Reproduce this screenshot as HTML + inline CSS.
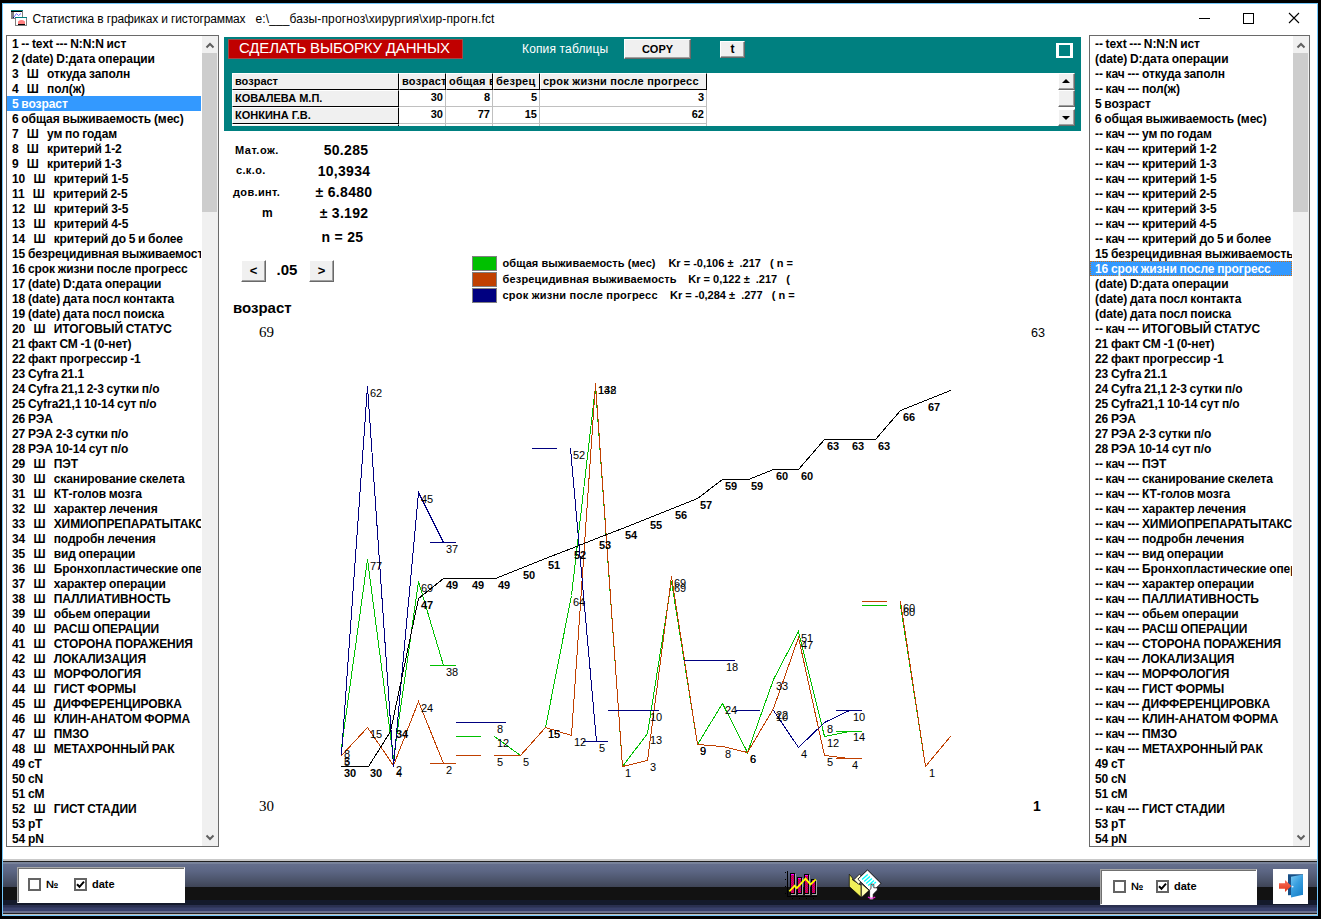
<!DOCTYPE html>
<html lang="ru"><head><meta charset="utf-8"><title>Статистика в графиках и гистограммах</title>
<style>
html,body{margin:0;padding:0;}
body{width:1321px;height:919px;background:#000;overflow:hidden;position:relative;font-family:"Liberation Sans",sans-serif;color:#000;}
.abs{position:absolute;}
#win{position:absolute;left:2px;top:3px;width:1314px;height:911px;border:1px solid #74c8fb;background:#fff;}
#title{position:absolute;left:32.5px;top:11px;font-size:12px;line-height:16px;white-space:pre;letter-spacing:0px;}
.list{position:absolute;top:35px;height:810px;border:1px solid #6a6a6a;background:#fff;overflow:hidden;}
.list .rows{position:absolute;left:0;top:0;right:17px;bottom:0;overflow:hidden;}
.list .r{height:15px;line-height:15px;font-size:12px;font-weight:bold;white-space:nowrap;padding-left:5px;overflow:hidden;letter-spacing:-0.08px;word-spacing:-0.5px;}
.list .r span{position:relative;top:1px;}
.list .r.sel{background:#3399ff;color:#fff;}
.list .r.foc{outline:1px dotted #d07010;outline-offset:-1px;}
.list .sb{position:absolute;right:0;top:0;bottom:0;width:16px;background:#f0f0f0;}
.list .sb .th{position:absolute;left:0;width:15px;top:17px;height:159px;background:#cdcdcd;}
.b{font-weight:bold;}
.btn{position:absolute;background:#f0f0f0;box-sizing:border-box;border:1px solid;border-color:#fff #696969 #696969 #fff;box-shadow:inset -1px -1px 0 #a0a0a0;font-weight:bold;text-align:center;}
.t{position:absolute;white-space:nowrap;}
svg text{font-family:"Liberation Sans",sans-serif;}
</style></head><body>
<div id="win"></div>

<div id="title"><span style="letter-spacing:-0.14px">Статистика в графиках и гистограммах</span>   <span style="letter-spacing:0.13px">e:\___базы-прогноз\хирургия\хир-прогн.fct</span></div>
<svg class="abs" style="left:0;top:0" width="1321" height="36" shape-rendering="crispEdges">
<g>
<rect x="11.5" y="10.5" width="11" height="8" fill="#fff" stroke="#808080"/>
<rect x="11" y="10" width="12" height="1" fill="#008080"/>
<rect x="11" y="11" width="11" height="1" fill="#000"/>
<rect x="12" y="12" width="2" height="6" fill="#808080"/>
<rect x="13" y="17" width="1" height="1" fill="#000080"/>
<polyline points="14,17 16.5,13.5 18.5,15.5 21,13.5" fill="none" stroke="#7070ff" shape-rendering="auto"/>
<rect x="15.5" y="17.5" width="11" height="8" fill="#fff" stroke="#808080"/>
<rect x="15" y="17" width="12" height="1" fill="#008080"/>
<path d="M18 24 V21.5 Q21.5 18.6 25 21.5 V24 Z" fill="#ff8080" shape-rendering="auto"/>
<rect x="18" y="24" width="7" height="1" fill="#000"/>
</g>
<rect x="1199" y="18" width="11" height="1" fill="#000"/>
<rect x="1243.5" y="13.5" width="10" height="10" fill="none" stroke="#000"/>
<path d="M1289 13 L1299 23 M1299 13 L1289 23" stroke="#000" stroke-width="1.1" fill="none" shape-rendering="auto"/>
</svg>
<div class="list" style="left:6px;width:211px"><div class="rows">
<div class="r"><span>1 -- text --- N:N:N ист</span></div>
<div class="r"><span>2 (date) D:дата операции</span></div>
<div class="r"><span>3&nbsp;&nbsp;&nbsp;Ш&nbsp;&nbsp;&nbsp;откуда заполн</span></div>
<div class="r"><span>4&nbsp;&nbsp;&nbsp;Ш&nbsp;&nbsp;&nbsp;пол(ж)</span></div>
<div class="r sel"><span>5 возраст</span></div>
<div class="r"><span>6 общая выживаемость (мес)</span></div>
<div class="r"><span>7&nbsp;&nbsp;&nbsp;Ш&nbsp;&nbsp;&nbsp;ум по годам</span></div>
<div class="r"><span>8&nbsp;&nbsp;&nbsp;Ш&nbsp;&nbsp;&nbsp;критерий 1-2</span></div>
<div class="r"><span>9&nbsp;&nbsp;&nbsp;Ш&nbsp;&nbsp;&nbsp;критерий 1-3</span></div>
<div class="r"><span>10&nbsp;&nbsp;&nbsp;Ш&nbsp;&nbsp;&nbsp;критерий 1-5</span></div>
<div class="r"><span>11&nbsp;&nbsp;&nbsp;Ш&nbsp;&nbsp;&nbsp;критерий 2-5</span></div>
<div class="r"><span>12&nbsp;&nbsp;&nbsp;Ш&nbsp;&nbsp;&nbsp;критерий 3-5</span></div>
<div class="r"><span>13&nbsp;&nbsp;&nbsp;Ш&nbsp;&nbsp;&nbsp;критерий 4-5</span></div>
<div class="r"><span>14&nbsp;&nbsp;&nbsp;Ш&nbsp;&nbsp;&nbsp;критерий до 5 и более</span></div>
<div class="r"><span>15 безрецидивная выживаемость</span></div>
<div class="r"><span>16 срок жизни после прогресс</span></div>
<div class="r"><span>17 (date) D:дата операции</span></div>
<div class="r"><span>18 (date) дата посл контакта</span></div>
<div class="r"><span>19 (date) дата посл поиска</span></div>
<div class="r"><span>20&nbsp;&nbsp;&nbsp;Ш&nbsp;&nbsp;&nbsp;ИТОГОВЫЙ СТАТУС</span></div>
<div class="r"><span>21 факт СМ -1 (0-нет)</span></div>
<div class="r"><span>22 факт прогрессир -1</span></div>
<div class="r"><span>23 Cyfra 21.1</span></div>
<div class="r"><span>24 Cyfra 21,1 2-3 сутки п/о</span></div>
<div class="r"><span>25 Cyfra21,1 10-14 сут п/о</span></div>
<div class="r"><span>26 РЭА</span></div>
<div class="r"><span>27 РЭА 2-3 сутки п/о</span></div>
<div class="r"><span>28 РЭА 10-14 сут п/о</span></div>
<div class="r"><span>29&nbsp;&nbsp;&nbsp;Ш&nbsp;&nbsp;&nbsp;ПЭТ</span></div>
<div class="r"><span>30&nbsp;&nbsp;&nbsp;Ш&nbsp;&nbsp;&nbsp;сканирование скелета</span></div>
<div class="r"><span>31&nbsp;&nbsp;&nbsp;Ш&nbsp;&nbsp;&nbsp;КТ-голов мозга</span></div>
<div class="r"><span>32&nbsp;&nbsp;&nbsp;Ш&nbsp;&nbsp;&nbsp;характер лечения</span></div>
<div class="r"><span>33&nbsp;&nbsp;&nbsp;Ш&nbsp;&nbsp;&nbsp;ХИМИОПРЕПАРАТЫТАКСОЛ</span></div>
<div class="r"><span>34&nbsp;&nbsp;&nbsp;Ш&nbsp;&nbsp;&nbsp;подробн лечения</span></div>
<div class="r"><span>35&nbsp;&nbsp;&nbsp;Ш&nbsp;&nbsp;&nbsp;вид операции</span></div>
<div class="r"><span>36&nbsp;&nbsp;&nbsp;Ш&nbsp;&nbsp;&nbsp;Бронхопластические опер</span></div>
<div class="r"><span>37&nbsp;&nbsp;&nbsp;Ш&nbsp;&nbsp;&nbsp;характер операции</span></div>
<div class="r"><span>38&nbsp;&nbsp;&nbsp;Ш&nbsp;&nbsp;&nbsp;ПАЛЛИАТИВНОСТЬ</span></div>
<div class="r"><span>39&nbsp;&nbsp;&nbsp;Ш&nbsp;&nbsp;&nbsp;обьем операции</span></div>
<div class="r"><span>40&nbsp;&nbsp;&nbsp;Ш&nbsp;&nbsp;&nbsp;РАСШ ОПЕРАЦИИ</span></div>
<div class="r"><span>41&nbsp;&nbsp;&nbsp;Ш&nbsp;&nbsp;&nbsp;СТОРОНА ПОРАЖЕНИЯ</span></div>
<div class="r"><span>42&nbsp;&nbsp;&nbsp;Ш&nbsp;&nbsp;&nbsp;ЛОКАЛИЗАЦИЯ</span></div>
<div class="r"><span>43&nbsp;&nbsp;&nbsp;Ш&nbsp;&nbsp;&nbsp;МОРФОЛОГИЯ</span></div>
<div class="r"><span>44&nbsp;&nbsp;&nbsp;Ш&nbsp;&nbsp;&nbsp;ГИСТ ФОРМЫ</span></div>
<div class="r"><span>45&nbsp;&nbsp;&nbsp;Ш&nbsp;&nbsp;&nbsp;ДИФФЕРЕНЦИРОВКА</span></div>
<div class="r"><span>46&nbsp;&nbsp;&nbsp;Ш&nbsp;&nbsp;&nbsp;КЛИН-АНАТОМ ФОРМА</span></div>
<div class="r"><span>47&nbsp;&nbsp;&nbsp;Ш&nbsp;&nbsp;&nbsp;ПМЗО</span></div>
<div class="r"><span>48&nbsp;&nbsp;&nbsp;Ш&nbsp;&nbsp;&nbsp;МЕТАХРОННЫЙ РАК</span></div>
<div class="r"><span>49 cT</span></div>
<div class="r"><span>50 cN</span></div>
<div class="r"><span>51 cM</span></div>
<div class="r"><span>52&nbsp;&nbsp;&nbsp;Ш&nbsp;&nbsp;&nbsp;ГИСТ СТАДИИ</span></div>
<div class="r"><span>53 pT</span></div>
<div class="r"><span>54 pN</span></div>
</div><div class="sb"><div class="th"></div>
<svg class="abs" style="left:0;top:0" width="16" height="810"><path d="M4.5 11.5 L8 8 L11.5 11.5" fill="none" stroke="#606060" stroke-width="2"/><path d="M4.5 799.5 L8 803 L11.5 799.5" fill="none" stroke="#606060" stroke-width="2"/></svg>
</div></div>
<div class="list" style="left:1089px;width:219px"><div class="rows">
<div class="r"><span>-- text --- N:N:N ист</span></div>
<div class="r"><span>(date) D:дата операции</span></div>
<div class="r"><span>-- кач --- откуда заполн</span></div>
<div class="r"><span>-- кач --- пол(ж)</span></div>
<div class="r"><span>5 возраст</span></div>
<div class="r"><span>6 общая выживаемость (мес)</span></div>
<div class="r"><span>-- кач --- ум по годам</span></div>
<div class="r"><span>-- кач --- критерий 1-2</span></div>
<div class="r"><span>-- кач --- критерий 1-3</span></div>
<div class="r"><span>-- кач --- критерий 1-5</span></div>
<div class="r"><span>-- кач --- критерий 2-5</span></div>
<div class="r"><span>-- кач --- критерий 3-5</span></div>
<div class="r"><span>-- кач --- критерий 4-5</span></div>
<div class="r"><span>-- кач --- критерий до 5 и более</span></div>
<div class="r"><span>15 безрецидивная выживаемость</span></div>
<div class="r sel foc"><span>16 срок жизни после прогресс</span></div>
<div class="r"><span>(date) D:дата операции</span></div>
<div class="r"><span>(date) дата посл контакта</span></div>
<div class="r"><span>(date) дата посл поиска</span></div>
<div class="r"><span>-- кач --- ИТОГОВЫЙ СТАТУС</span></div>
<div class="r"><span>21 факт СМ -1 (0-нет)</span></div>
<div class="r"><span>22 факт прогрессир -1</span></div>
<div class="r"><span>23 Cyfra 21.1</span></div>
<div class="r"><span>24 Cyfra 21,1 2-3 сутки п/о</span></div>
<div class="r"><span>25 Cyfra21,1 10-14 сут п/о</span></div>
<div class="r"><span>26 РЭА</span></div>
<div class="r"><span>27 РЭА 2-3 сутки п/о</span></div>
<div class="r"><span>28 РЭА 10-14 сут п/о</span></div>
<div class="r"><span>-- кач --- ПЭТ</span></div>
<div class="r"><span>-- кач --- сканирование скелета</span></div>
<div class="r"><span>-- кач --- КТ-голов мозга</span></div>
<div class="r"><span>-- кач --- характер лечения</span></div>
<div class="r"><span>-- кач --- ХИМИОПРЕПАРАТЫТАКСОЛ</span></div>
<div class="r"><span>-- кач --- подробн лечения</span></div>
<div class="r"><span>-- кач --- вид операции</span></div>
<div class="r"><span>-- кач --- Бронхопластические опер</span></div>
<div class="r"><span>-- кач --- характер операции</span></div>
<div class="r"><span>-- кач --- ПАЛЛИАТИВНОСТЬ</span></div>
<div class="r"><span>-- кач --- обьем операции</span></div>
<div class="r"><span>-- кач --- РАСШ ОПЕРАЦИИ</span></div>
<div class="r"><span>-- кач --- СТОРОНА ПОРАЖЕНИЯ</span></div>
<div class="r"><span>-- кач --- ЛОКАЛИЗАЦИЯ</span></div>
<div class="r"><span>-- кач --- МОРФОЛОГИЯ</span></div>
<div class="r"><span>-- кач --- ГИСТ ФОРМЫ</span></div>
<div class="r"><span>-- кач --- ДИФФЕРЕНЦИРОВКА</span></div>
<div class="r"><span>-- кач --- КЛИН-АНАТОМ ФОРМА</span></div>
<div class="r"><span>-- кач --- ПМЗО</span></div>
<div class="r"><span>-- кач --- МЕТАХРОННЫЙ РАК</span></div>
<div class="r"><span>49 cT</span></div>
<div class="r"><span>50 cN</span></div>
<div class="r"><span>51 cM</span></div>
<div class="r"><span>-- кач --- ГИСТ СТАДИИ</span></div>
<div class="r"><span>53 pT</span></div>
<div class="r"><span>54 pN</span></div>
</div><div class="sb"><div class="th"></div>
<svg class="abs" style="left:0;top:0" width="16" height="810"><path d="M4.5 11.5 L8 8 L11.5 11.5" fill="none" stroke="#606060" stroke-width="2"/><path d="M4.5 799.5 L8 803 L11.5 799.5" fill="none" stroke="#606060" stroke-width="2"/></svg>
</div></div>
<div class="abs" style="left:224px;top:37px;width:857px;height:94px;background:#008080"></div>
<div class="abs" style="left:228px;top:39px;width:233px;height:18px;background:#c00000;border:1px solid #a04848;color:#fff;font-size:15px;letter-spacing:-0.18px;line-height:19px;white-space:nowrap"><span style="position:absolute;left:10px;top:-2px">СДЕЛАТЬ ВЫБОРКУ ДАННЫХ</span></div>
<div class="t" style="left:522px;top:42px;font-size:12px;line-height:14px;letter-spacing:0.15px;color:#fff">Копия таблицы</div>
<div class="btn" style="left:624px;top:39px;width:67px;height:20px;font-size:11px;line-height:18px">COPY</div>
<div class="btn" style="left:720px;top:41px;width:25px;height:17px;font-size:12px;line-height:14px">t</div>
<div class="abs" style="left:1056px;top:43px;width:11px;height:11px;border:2px solid #fff;border-left-width:3px;border-right-width:3px"></div>
<div class="abs" style="left:232px;top:73px;width:826px;height:53px;background:#fff;overflow:hidden;font-size:11px;font-weight:bold;line-height:15px">
<div class="abs" style="letter-spacing:0px;left:0px;top:0px;width:167px;height:17px;background:#f0f0f0;border-top:1px solid #fff;border-left:1px solid #fff;border-right:1px solid #000;border-bottom:1px solid #000;box-sizing:border-box;overflow:hidden;white-space:nowrap"><span style="position:absolute;left:2px;top:0px">возраст</span></div>
<div class="abs" style="letter-spacing:0.25px;left:167px;top:0px;width:47px;height:17px;background:#f0f0f0;border-top:1px solid #fff;border-left:1px solid #fff;border-right:1px solid #000;border-bottom:1px solid #000;box-sizing:border-box;overflow:hidden;white-space:nowrap"><span style="position:absolute;left:2px;top:0px">возраст</span></div>
<div class="abs" style="letter-spacing:0.25px;left:214px;top:0px;width:47px;height:17px;background:#f0f0f0;border-top:1px solid #fff;border-left:1px solid #fff;border-right:1px solid #000;border-bottom:1px solid #000;box-sizing:border-box;overflow:hidden;white-space:nowrap"><span style="position:absolute;left:2px;top:0px">общая в</span></div>
<div class="abs" style="letter-spacing:0.25px;left:261px;top:0px;width:47px;height:17px;background:#f0f0f0;border-top:1px solid #fff;border-left:1px solid #fff;border-right:1px solid #000;border-bottom:1px solid #000;box-sizing:border-box;overflow:hidden;white-space:nowrap"><span style="position:absolute;left:2px;top:0px">безрец</span></div>
<div class="abs" style="letter-spacing:0.25px;left:308px;top:0px;width:167px;height:17px;background:#f0f0f0;border-top:1px solid #fff;border-left:1px solid #fff;border-right:1px solid #000;border-bottom:1px solid #000;box-sizing:border-box;overflow:hidden;white-space:nowrap"><span style="position:absolute;left:2px;top:0px">срок жизни после прогресс</span></div>
<div class="abs" style="letter-spacing:0px;left:0px;top:17px;width:167px;height:17px;background:#f0f0f0;border-top:1px solid #fff;border-left:1px solid #fff;border-right:1px solid #000;border-bottom:1px solid #000;box-sizing:border-box;overflow:hidden;white-space:nowrap"><span style="position:absolute;left:2px;top:0px">КОВАЛЕВА М.П.</span></div>
<div class="abs" style="left:167px;top:17px;width:47px;height:17px;border-right:1px solid #c0c0c0;border-bottom:1px solid #c0c0c0;box-sizing:border-box;text-align:right;padding-right:2px;overflow:hidden;white-space:nowrap">30</div>
<div class="abs" style="left:214px;top:17px;width:47px;height:17px;border-right:1px solid #c0c0c0;border-bottom:1px solid #c0c0c0;box-sizing:border-box;text-align:right;padding-right:2px;overflow:hidden;white-space:nowrap">8</div>
<div class="abs" style="left:261px;top:17px;width:47px;height:17px;border-right:1px solid #c0c0c0;border-bottom:1px solid #c0c0c0;box-sizing:border-box;text-align:right;padding-right:2px;overflow:hidden;white-space:nowrap">5</div>
<div class="abs" style="left:308px;top:17px;width:167px;height:17px;border-right:1px solid #c0c0c0;border-bottom:1px solid #c0c0c0;box-sizing:border-box;text-align:right;padding-right:2px;overflow:hidden;white-space:nowrap">3</div>
<div class="abs" style="letter-spacing:0px;left:0px;top:34px;width:167px;height:17px;background:#f0f0f0;border-top:1px solid #fff;border-left:1px solid #fff;border-right:1px solid #000;border-bottom:1px solid #000;box-sizing:border-box;overflow:hidden;white-space:nowrap"><span style="position:absolute;left:2px;top:0px">КОНКИНА Г.В.</span></div>
<div class="abs" style="left:167px;top:34px;width:47px;height:17px;border-right:1px solid #c0c0c0;border-bottom:1px solid #c0c0c0;box-sizing:border-box;text-align:right;padding-right:2px;overflow:hidden;white-space:nowrap">30</div>
<div class="abs" style="left:214px;top:34px;width:47px;height:17px;border-right:1px solid #c0c0c0;border-bottom:1px solid #c0c0c0;box-sizing:border-box;text-align:right;padding-right:2px;overflow:hidden;white-space:nowrap">77</div>
<div class="abs" style="left:261px;top:34px;width:47px;height:17px;border-right:1px solid #c0c0c0;border-bottom:1px solid #c0c0c0;box-sizing:border-box;text-align:right;padding-right:2px;overflow:hidden;white-space:nowrap">15</div>
<div class="abs" style="left:308px;top:34px;width:167px;height:17px;border-right:1px solid #c0c0c0;border-bottom:1px solid #c0c0c0;box-sizing:border-box;text-align:right;padding-right:2px;overflow:hidden;white-space:nowrap">62</div>
<div class="abs" style="letter-spacing:0px;left:0px;top:51px;width:167px;height:17px;background:#f0f0f0;border-top:1px solid #fff;border-left:1px solid #fff;border-right:1px solid #000;border-bottom:1px solid #000;box-sizing:border-box;overflow:hidden;white-space:nowrap"><span style="position:absolute;left:2px;top:0px"></span></div>
<div class="abs" style="left:167px;top:51px;width:47px;height:17px;border-right:1px solid #c0c0c0;border-bottom:1px solid #c0c0c0;box-sizing:border-box;text-align:right;padding-right:2px;overflow:hidden;white-space:nowrap"></div>
<div class="abs" style="left:214px;top:51px;width:47px;height:17px;border-right:1px solid #c0c0c0;border-bottom:1px solid #c0c0c0;box-sizing:border-box;text-align:right;padding-right:2px;overflow:hidden;white-space:nowrap"></div>
<div class="abs" style="left:261px;top:51px;width:47px;height:17px;border-right:1px solid #c0c0c0;border-bottom:1px solid #c0c0c0;box-sizing:border-box;text-align:right;padding-right:2px;overflow:hidden;white-space:nowrap"></div>
<div class="abs" style="left:308px;top:51px;width:167px;height:17px;border-right:1px solid #c0c0c0;border-bottom:1px solid #c0c0c0;box-sizing:border-box;text-align:right;padding-right:2px;overflow:hidden;white-space:nowrap"></div>
</div>
<div class="abs" style="left:1058px;top:73px;width:17px;height:53px;background:#fff"></div>
<div class="btn" style="left:1058px;top:73px;width:17px;height:17px"></div>
<div class="btn" style="left:1058px;top:90px;width:17px;height:17px"></div>
<div class="btn" style="left:1058px;top:109px;width:17px;height:17px"></div>
<svg class="abs" style="left:1058px;top:72px" width="17" height="54"><path d="M4 11 L8 7 L12 11 Z" fill="#000"/><path d="M4 44 L8 48 L12 44 Z" fill="#000"/></svg>
<svg class="abs" style="left:0;top:0" width="1321" height="860"><text x="235" y="154" font-size="11" font-weight="bold" letter-spacing="0.5">Мат.ож.</text>
<text x="236" y="174" font-size="11" font-weight="bold" letter-spacing="0.35">с.к.о.</text>
<text x="233" y="196" font-size="11" font-weight="bold" letter-spacing="0.35">дов.инт.</text>
<text x="262" y="217" font-size="12" font-weight="bold">m</text>
<text x="346" y="155" font-size="14" font-weight="bold" text-anchor="middle" letter-spacing="0.3">50.285</text>
<text x="344" y="176" font-size="14" font-weight="bold" text-anchor="middle" letter-spacing="0.3">10,3934</text>
<text x="344" y="197" font-size="14" font-weight="bold" text-anchor="middle" letter-spacing="0.3">± 6.8480</text>
<text x="344" y="218" font-size="14" font-weight="bold" text-anchor="middle" letter-spacing="0.3">± 3.192</text>
<text x="342.5" y="242" font-size="14" font-weight="bold" text-anchor="middle" letter-spacing="0.3">n = 25</text>
<text x="287" y="275" font-size="15" font-weight="bold" text-anchor="middle">.05</text>
<text x="233" y="313" font-size="15" font-weight="bold">возраст</text>
<text x="259" y="337" font-size="15" style="font-family:&quot;Liberation Serif&quot;,serif">69</text>
<text x="1031" y="337" font-size="13.6" textLength="14" lengthAdjust="spacingAndGlyphs">63</text>
<text x="259" y="811" font-size="15" style="font-family:&quot;Liberation Serif&quot;,serif">30</text>
<text x="1033" y="811" font-size="14" font-weight="bold">1</text>
<rect x="472.5" y="256.5" width="24" height="14" fill="#00c000" stroke="#808080" shape-rendering="crispEdges"/>
<text x="502.5" y="267" font-size="11" font-weight="bold" textLength="153" lengthAdjust="spacing">общая выживаемость (мес)</text>
<text x="668.4" y="267" font-size="11" font-weight="bold" xml:space="preserve">Kr = -0,106 ±  .217   ( n =</text>
<rect x="472.5" y="272.5" width="24" height="14" fill="#c04000" stroke="#808080" shape-rendering="crispEdges"/>
<text x="502.5" y="283" font-size="11" font-weight="bold" textLength="174" lengthAdjust="spacing">безрецидивная выживаемость</text>
<text x="688.3" y="283" font-size="11" font-weight="bold" xml:space="preserve">Kr = 0,122 ±  .217   (</text>
<rect x="472.5" y="288.5" width="24" height="14" fill="#000080" stroke="#808080" shape-rendering="crispEdges"/>
<text x="502.5" y="299" font-size="11" font-weight="bold" textLength="155" lengthAdjust="spacing">срок жизни после прогресс</text>
<text x="670" y="299" font-size="11" font-weight="bold" xml:space="preserve">Kr = -0,284 ±  .277   ( n =</text>
<polyline points="341.5,747.5 367.5,559.5 393.5,758.5 418.5,581.5 443.5,665.5" fill="none" stroke="#00c000" stroke-width="1" stroke-linecap="square" shape-rendering="crispEdges"/>
<rect x="430" y="665" width="26" height="1" fill="#00c000" shape-rendering="crispEdges"/>
<rect x="456" y="736" width="25" height="1" fill="#00c000" shape-rendering="crispEdges"/>
<polyline points="494.5,736.5 520.5,755.5 545.5,727.5 571.5,595.5 595.5,386.5 622.5,766.5 647.5,733.5 671.5,581.5 697.5,744.5 722.5,703.5 747.5,752.5 773.5,679.5 798.5,631.5 824.5,736.5 849.5,731.5" fill="none" stroke="#00c000" stroke-width="1" stroke-linecap="square" shape-rendering="crispEdges"/>
<rect x="836" y="731" width="26" height="1" fill="#00c000" shape-rendering="crispEdges"/>
<rect x="862" y="605" width="25" height="1" fill="#00c000" shape-rendering="crispEdges"/>
<polyline points="900.5,605.5 925.5,766.5 950.5,736.5" fill="none" stroke="#00c000" stroke-width="1" stroke-linecap="square" shape-rendering="crispEdges"/>
<polyline points="341.5,755.5 367.5,727.5 393.5,765.5 418.5,701.5 443.5,763.5" fill="none" stroke="#c04000" stroke-width="1" stroke-linecap="square" shape-rendering="crispEdges"/>
<rect x="430" y="763" width="26" height="1" fill="#c04000" shape-rendering="crispEdges"/>
<rect x="456" y="755" width="25" height="1" fill="#c04000" shape-rendering="crispEdges"/>
<rect x="494" y="755" width="26" height="1" fill="#c04000" shape-rendering="crispEdges"/>
<polyline points="520.5,755.5 545.5,727.5 571.5,735.5 595.5,383.5 622.5,766.5 647.5,760.5 671.5,576.5 697.5,744.5 722.5,746.5 747.5,752.5 773.5,708.5 798.5,637.5 824.5,755.5 849.5,758.5" fill="none" stroke="#c04000" stroke-width="1" stroke-linecap="square" shape-rendering="crispEdges"/>
<rect x="836" y="758" width="26" height="1" fill="#c04000" shape-rendering="crispEdges"/>
<rect x="862" y="601" width="25" height="1" fill="#c04000" shape-rendering="crispEdges"/>
<polyline points="900.5,601.5 925.5,766.5 950.5,736.5" fill="none" stroke="#c04000" stroke-width="1" stroke-linecap="square" shape-rendering="crispEdges"/>
<polyline points="341.5,754.5 367.5,386.5 393.5,766.5 418.5,492.5 443.5,542.5" fill="none" stroke="#000080" stroke-width="1" stroke-linecap="square" shape-rendering="crispEdges"/>
<rect x="430" y="542" width="26" height="1" fill="#000080" shape-rendering="crispEdges"/>
<rect x="456" y="722" width="50" height="1" fill="#000080" shape-rendering="crispEdges"/>
<rect x="532" y="448" width="25" height="1" fill="#000080" shape-rendering="crispEdges"/>
<polyline points="570.5,448.5 596.5,741.5" fill="none" stroke="#000080" stroke-width="1" stroke-linecap="square" shape-rendering="crispEdges"/>
<rect x="583" y="741" width="25" height="1" fill="#000080" shape-rendering="crispEdges"/>
<rect x="608" y="710" width="51" height="1" fill="#000080" shape-rendering="crispEdges"/>
<rect x="684" y="660" width="51" height="1" fill="#000080" shape-rendering="crispEdges"/>
<rect x="736" y="710" width="24" height="1" fill="#000080" shape-rendering="crispEdges"/>
<polyline points="773.5,710.5 798.5,747.5 824.5,722.5 849.5,710.5" fill="none" stroke="#000080" stroke-width="1" stroke-linecap="square" shape-rendering="crispEdges"/>
<rect x="836" y="710" width="26" height="1" fill="#000080" shape-rendering="crispEdges"/>
<polyline points="341.5,766.5 368.5,766.5 390.5,731.5 418.5,598.5 443.5,578.5 469.5,578.5 495.5,578.5 520.5,568.5 545.5,558.5 571.5,548.5 596.5,538.5 622.5,528.5 647.5,518.5 672.5,508.5 697.5,498.5 722.5,479.5 748.5,479.5 773.5,469.5 798.5,469.5 824.5,439.5 849.5,439.5 875.5,439.5 900.5,410.5 925.5,400.5 950.5,390.5" fill="none" stroke="#000" stroke-width="1" stroke-linecap="square" shape-rendering="crispEdges"/>
<text x="344" y="758" font-size="11">8</text>
<text x="370" y="570" font-size="11">77</text>
<text x="421" y="592" font-size="11">69</text>
<text x="446" y="676" font-size="11">38</text>
<text x="497" y="747" font-size="11">12</text>
<text x="548" y="738" font-size="11">15</text>
<text x="573" y="606" font-size="11">64</text>
<text x="598" y="394" font-size="11">142</text>
<text x="625" y="777" font-size="11">1</text>
<text x="650" y="744" font-size="11">13</text>
<text x="674" y="592" font-size="11">69</text>
<text x="700" y="755" font-size="11">9</text>
<text x="725" y="714" font-size="11">24</text>
<text x="750" y="763" font-size="11">6</text>
<text x="776" y="690" font-size="11">33</text>
<text x="801" y="642" font-size="11">51</text>
<text x="827" y="747" font-size="11">12</text>
<text x="853" y="741" font-size="11">14</text>
<text x="903" y="616" font-size="11">60</text>
<text x="929" y="777" font-size="11">1</text>
<text x="344" y="766" font-size="11">5</text>
<text x="370" y="738" font-size="11">15</text>
<text x="396" y="774" font-size="11">2</text>
<text x="421" y="712" font-size="11">24</text>
<text x="446" y="774" font-size="11">2</text>
<text x="497" y="766" font-size="11">5</text>
<text x="523" y="766" font-size="11">5</text>
<text x="548" y="738" font-size="11">15</text>
<text x="574" y="746" font-size="11">12</text>
<text x="598" y="394" font-size="11">138</text>
<text x="650" y="771" font-size="11">3</text>
<text x="674" y="587" font-size="11">69</text>
<text x="700" y="755" font-size="11">9</text>
<text x="725" y="758" font-size="11">8</text>
<text x="750" y="763" font-size="11">6</text>
<text x="776" y="719" font-size="11">22</text>
<text x="801" y="649" font-size="11">47</text>
<text x="827" y="766" font-size="11">5</text>
<text x="852" y="769" font-size="11">4</text>
<text x="903" y="612" font-size="11">60</text>
<text x="344" y="765" font-size="11">3</text>
<text x="370" y="397" font-size="11">62</text>
<text x="396" y="777" font-size="11">4</text>
<text x="421" y="503" font-size="11">45</text>
<text x="446" y="553" font-size="11">37</text>
<text x="497" y="733" font-size="11">8</text>
<text x="573" y="459" font-size="11">52</text>
<text x="599" y="752" font-size="11">5</text>
<text x="650" y="721" font-size="11">10</text>
<text x="726" y="671" font-size="11">18</text>
<text x="776" y="721" font-size="11">10</text>
<text x="801" y="758" font-size="11">4</text>
<text x="827" y="733" font-size="11">8</text>
<text x="853" y="721" font-size="11">10</text>
<text x="344" y="777" font-size="11" font-weight="bold">30</text>
<text x="370" y="777" font-size="11" font-weight="bold">30</text>
<text x="396" y="738" font-size="11" font-weight="bold">34</text>
<text x="421" y="609" font-size="11" font-weight="bold">47</text>
<text x="446" y="589" font-size="11" font-weight="bold">49</text>
<text x="472" y="589" font-size="11" font-weight="bold">49</text>
<text x="498" y="589" font-size="11" font-weight="bold">49</text>
<text x="523" y="579" font-size="11" font-weight="bold">50</text>
<text x="548" y="569" font-size="11" font-weight="bold">51</text>
<text x="574" y="559" font-size="11" font-weight="bold">52</text>
<text x="599" y="549" font-size="11" font-weight="bold">53</text>
<text x="625" y="539" font-size="11" font-weight="bold">54</text>
<text x="650" y="529" font-size="11" font-weight="bold">55</text>
<text x="675" y="519" font-size="11" font-weight="bold">56</text>
<text x="700" y="509" font-size="11" font-weight="bold">57</text>
<text x="725" y="490" font-size="11" font-weight="bold">59</text>
<text x="751" y="490" font-size="11" font-weight="bold">59</text>
<text x="776" y="480" font-size="11" font-weight="bold">60</text>
<text x="801" y="480" font-size="11" font-weight="bold">60</text>
<text x="827" y="450" font-size="11" font-weight="bold">63</text>
<text x="852" y="450" font-size="11" font-weight="bold">63</text>
<text x="878" y="450" font-size="11" font-weight="bold">63</text>
<text x="903" y="421" font-size="11" font-weight="bold">66</text>
<text x="928" y="411" font-size="11" font-weight="bold">67</text></svg>
<div class="btn" style="left:241px;top:260px;width:25px;height:22px;font-size:13px;line-height:19px">&lt;</div>
<div class="btn" style="left:309px;top:260px;width:25px;height:22px;font-size:13px;line-height:19px">&gt;</div>
<div class="abs" style="left:3px;top:859px;width:1314px;height:56px;background:linear-gradient(to bottom,#cacaca 0,#c6c6c6 2px,#202020 2px,#202020 3px,#7a849a 3px,#78829a 4.5px,#646e8c 5.5px,#5c6684 12px,#4a5268 22px,#3e4456 28px,#121212 28px,#121212 41px,#141a2c 41.5px,#141a2c 45.5px,#2a3050 46.5px,#2a3050 48px,#38406a 49px,#38406a 52px,#686e8c 52px,#686e8c 54px,#202020 54px,#202020 55px,#c0c0c0 55px)"></div>
<div class="abs" style="left:17px;top:867px;width:168px;height:36px;background:#fff;box-sizing:border-box;border:1px solid;border-color:#a8a8a8 #fff #fff #a8a8a8;box-shadow:inset 1px 1px 0 #707070"></div>
<div class="abs" style="left:28px;top:878px;width:9px;height:9px;border:2px solid #646464;background:#fff"></div>
<div class="abs" style="left:74px;top:878px;width:9px;height:9px;border:2px solid #646464;background:#fff"></div>
<svg class="abs" style="left:74px;top:878px" width="13" height="13"><path d="M3 6.2 L5.5 8.8 L10 3.6" fill="none" stroke="#000" stroke-width="2"/></svg>
<div class="t b" style="left:46px;top:877px;font-size:11px;line-height:14px">№</div>
<div class="t b" style="left:92px;top:877px;font-size:11px;line-height:14px">date</div>
<div class="abs" style="left:1100px;top:869px;width:157px;height:36px;background:#fff;box-sizing:border-box;border:1px solid;border-color:#a8a8a8 #fff #fff #a8a8a8;box-shadow:inset 1px 1px 0 #707070"></div>
<div class="abs" style="left:1113px;top:880px;width:9px;height:9px;border:2px solid #646464;background:#fff"></div>
<div class="abs" style="left:1156px;top:880px;width:9px;height:9px;border:2px solid #646464;background:#fff"></div>
<svg class="abs" style="left:1156px;top:880px" width="13" height="13"><path d="M3 6.2 L5.5 8.8 L10 3.6" fill="none" stroke="#000" stroke-width="2"/></svg>
<div class="t b" style="left:1131px;top:879px;font-size:11px;line-height:14px">№</div>
<div class="t b" style="left:1174px;top:879px;font-size:11px;line-height:14px">date</div>
<div class="abs" style="left:1273px;top:869px;width:35px;height:35px;background:#fff"></div>
<svg class="abs" style="left:1273px;top:869px" width="35" height="35">
<defs><linearGradient id="dg" x1="0" y1="0" x2="0.6" y2="1"><stop offset="0" stop-color="#7ccaf2"/><stop offset="0.5" stop-color="#3aa0e0"/><stop offset="1" stop-color="#1a84cc"/></linearGradient>
<linearGradient id="ag" x1="0" y1="0" x2="0" y2="1"><stop offset="0" stop-color="#f8705c"/><stop offset="1" stop-color="#e03418"/></linearGradient></defs>
<path d="M15 5.2 L30 5.2 L30 25.8 L15 26.2 Z" fill="#174f86"/>
<path d="M18 7.7 L30 5.4 L30 25.7 L18 28.6 Z" fill="url(#dg)"/>
<path d="M6 14.2 H12 V11 L18.4 17 L12 23 V19.8 H6 Z" fill="url(#ag)"/>
<circle cx="19.6" cy="17.6" r="0.9" fill="#e8f6ff"/>
</svg>
<svg class="abs" style="left:780px;top:864px" width="44" height="40" shape-rendering="crispEdges">
<defs><pattern id="ck" width="2" height="2" patternUnits="userSpaceOnUse"><rect width="2" height="2" fill="#ff0000"/><rect width="1" height="1" fill="#9000c0"/><rect x="1" y="1" width="1" height="1" fill="#9000c0"/></pattern></defs>
<rect x="7" y="7" width="1" height="26" fill="#000"/><rect x="7" y="32" width="30" height="1" fill="#000"/>
<g fill="#000"><rect x="5" y="8" width="1" height="1"/><rect x="5" y="15" width="1" height="1"/><rect x="5" y="22" width="1" height="1"/><rect x="5" y="29" width="1" height="1"/><rect x="12" y="34" width="1" height="1"/><rect x="19" y="34" width="1" height="1"/><rect x="26" y="34" width="1" height="1"/><rect x="33" y="34" width="1" height="1"/></g>
<g fill="#a8a8a8"><rect x="15" y="10" width="1" height="21"/><rect x="11" y="30" width="5" height="1"/><rect x="22" y="14" width="1" height="17"/><rect x="18" y="30" width="5" height="1"/><rect x="29" y="11" width="1" height="20"/><rect x="25" y="30" width="5" height="1"/><rect x="36" y="16" width="1" height="15"/><rect x="32" y="30" width="5" height="1"/></g>
<g fill="#000"><rect x="10" y="9" width="5" height="21"/><rect x="17" y="13" width="5" height="17"/><rect x="24" y="10" width="5" height="20"/><rect x="31" y="15" width="5" height="15"/></g>
<g fill="url(#ck)"><rect x="11" y="10" width="3" height="19"/><rect x="18" y="14" width="3" height="15"/><rect x="25" y="11" width="3" height="18"/><rect x="32" y="16" width="3" height="13"/></g>
<g fill="#ff00ff"><rect x="11" y="10" width="3" height="1"/><rect x="18" y="14" width="3" height="1"/><rect x="25" y="11" width="3" height="1"/></g>
<polyline points="9.3,27.4 14.6,21.9 16.8,24.2 25.5,14.7 30.5,20.4 35.8,15.4" fill="none" stroke="#ffff00" stroke-width="1.8" shape-rendering="auto"/>
</svg>
<svg class="abs" style="left:844px;top:864px" width="44" height="40">
<path d="M5.3 10.3 L8.6 14.2 L8.6 16 L17 21.3 L17 33.2 L5.3 22.6 Z" fill="#efef58" stroke="#000" stroke-width="0.7"/>
<path d="M17.5 33.2 L17.5 20 L25 26.3 Z" fill="#ffffb0" stroke="#000" stroke-width="0.4"/>
<path d="M10 15.7 L15.4 10.2 L20 14.6 L14.6 20.3 Z" fill="#fffde0" stroke="#000" stroke-width="0.7"/>
<path d="M13.9 15.2 L23.5 5.9 L37 19.4 L27.6 28.6 Z" fill="#fff" stroke="#000" stroke-width="0.9"/>
<path d="M18.1 15.4 L23.7 10.4 M20.2 17.5 L25.9 12.4 M22.2 19.5 L27.9 14.4 M24.2 21.5 L30 16.4 M30.2 19.6 L32 18" stroke="#00ffff" stroke-width="1.3" fill="none"/>
<path d="M27 20.2 h2.8 v3.6 h3.6 v2.2 l-4.2 4.2 v5.6 h-3.6 v-9.6 l1.4 -2 Z" fill="#fff" stroke="#000" stroke-width="0.7"/>
<rect x="28" y="20.8" width="1.2" height="1.6" fill="#00e8e8"/>
<path d="M24 33 q3.6 2.6 7.2 0" stroke="#ff20e0" stroke-width="1.1" fill="none"/>
</svg>
</body></html>
